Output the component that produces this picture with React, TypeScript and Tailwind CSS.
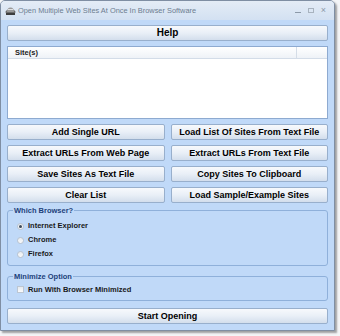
import React from "react";

const font = { fontFamily: '"Liberation Sans", Arial, sans-serif' };

function Btn({ children, big }: { children: React.ReactNode; big?: boolean }) {
  return (
    <div
      className={`h-[16px] flex items-center justify-center rounded-[2px] border border-[#98afcc] bg-gradient-to-b from-[#f7f9fc] via-[#e9eff7] to-[#d3deec] font-bold text-black leading-none ${big ? "text-[10px]" : "text-[9px]"}`}
    >
      {children}
    </div>
  );
}

function Radio({ checked }: { checked?: boolean }) {
  return (
    <span className="w-[7px] h-[7px] rounded-full border border-[#b9c3cf] bg-gradient-to-b from-[#e8ecf1] to-[#f8f9fb] flex items-center justify-center">
      {checked && <span className="w-[3px] h-[3px] rounded-full bg-[#3b4a5c]" />}
    </span>
  );
}

export default function App() {
  return (
    <div className="w-[340px] h-[336px] bg-[#f4f5f7] relative overflow-hidden" style={font}>
      <div className="w-[335px] h-[331px] border border-[#7f8ea3] rounded-t-[5px] bg-[#c9ddf4] flex flex-col shadow-[2px_2px_2px_rgba(0,0,0,0.35)]">
        {/* Title bar */}
        <div className="h-[19px] flex items-center pl-[4px] pr-[8px] bg-gradient-to-b from-[#e4ecf6] to-[#d3e1f2] rounded-t-[4px]">
          <svg width="11" height="10" viewBox="0 0 11 10" className="mr-[2px]">
            <ellipse cx="5.5" cy="6" rx="5" ry="2.5" fill="#6b6b6b" />
            <path d="M2 6 Q2 1.5 5.5 1.5 Q9 1.5 9 6 Z" fill="#9a9a9a" />
            <rect x="1" y="7" width="9" height="2" fill="#3d3d3d" />
            <rect x="3" y="3" width="5" height="1" fill="#e0e0e0" />
          </svg>
          <span className="text-[7.4px] text-[#6c7d90] leading-none">
            Open Multiple Web Sites At Once In Browser Software
          </span>
          <div className="ml-auto flex items-center gap-[7px] text-[#8c99a8] text-[8px] leading-none">
            <span className="w-[6px] h-[1px] bg-[#8c99a8] mt-[3px]" />
            <span className="w-[6px] h-[5px] border border-[#a8b3bf]" />
            <span className="text-[9px]">×</span>
          </div>
        </div>
        {/* Body */}
        <div className="flex-1 bg-[#c0d9f8] px-[6px] pt-[5px] flex flex-col">
          <Btn big>Help</Btn>
          {/* List */}
          <div className="mt-[5px] h-[73px] border border-[#8eaad0] bg-white flex flex-col">
            <div className="h-[12px] flex border-b border-[#d3dce8] bg-gradient-to-b from-white to-[#eef2f7]">
              <div className="w-[289px] border-r border-[#d5dde7] flex items-center pl-[7px] text-[7.5px] font-bold text-[#222] leading-none">
                Site(s)
              </div>
              <div className="flex-1" />
            </div>
          </div>
          {/* Button grid */}
          <div className="mt-[5px] grid grid-cols-2 gap-x-[6px] gap-y-[5px]">
            <Btn>Add Single URL</Btn>
            <Btn>Load List Of Sites From Text File</Btn>
            <Btn>Extract URLs From Web Page</Btn>
            <Btn>Extract URLs From Text File</Btn>
            <Btn>Save Sites As Text File</Btn>
            <Btn>Copy Sites To Clipboard</Btn>
            <Btn>Clear List</Btn>
            <Btn>Load Sample/Example Sites</Btn>
          </div>
          {/* Which Browser */}
          <fieldset className="mt-[4px] h-[59px] border border-[#8fb0da] rounded-[3px] px-[8px]">
            <legend className="px-[1px] ml-[-3px] text-[7.5px] font-bold text-[#1d3f7a] leading-none">
              Which Browser?
            </legend>
            <div className="flex flex-col gap-[5px] pt-[7px] pl-[1px]">
              {["Internet Explorer", "Chrome", "Firefox"].map((t, i) => (
                <div key={t} className="flex items-center gap-[4px] h-[9px]">
                  <Radio checked={i === 0} />
                  <span className="text-[7.5px] font-bold text-[#1a1a1a] leading-none">{t}</span>
                </div>
              ))}
            </div>
          </fieldset>
          {/* Minimize Option */}
          <fieldset className="mt-[7px] h-[28px] border border-[#8fb0da] rounded-[3px] px-[8px]">
            <legend className="px-[1px] ml-[-3px] text-[7.5px] font-bold text-[#1d3f7a] leading-none">
              Minimize Option
            </legend>
            <div className="flex items-center gap-[4px] pt-[4px] pl-[1px] h-[14px]">
              <span className="w-[7px] h-[7px] border border-[#bcc6d2] bg-gradient-to-b from-[#e6eaf0] to-[#fafbfc]" />
              <span className="text-[7.5px] font-bold text-[#1a1a1a] leading-none">Run With Browser Minimized</span>
            </div>
          </fieldset>
          <div className="mt-[7px]">
            <Btn>Start Opening</Btn>
          </div>
        </div>
      </div>
    </div>
  );
}
